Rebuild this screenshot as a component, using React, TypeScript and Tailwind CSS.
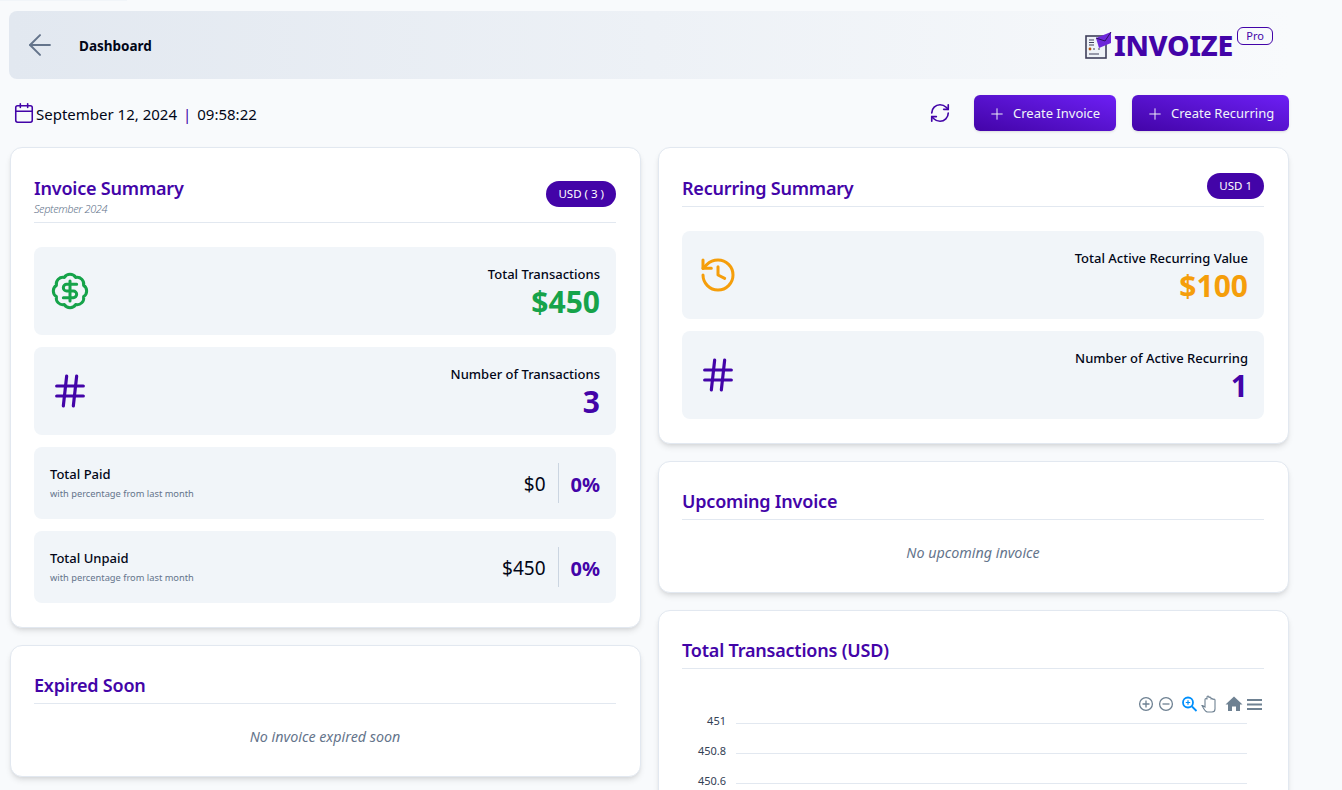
import { ArrowLeft, BadgeDollarSign, Calendar, Hash, History, Plus, RefreshCw } from 'lucide-react';

function Logo() {
  return (
    <svg width="27" height="28" viewBox="0 0 27 28" className="shrink-0">
      <rect x="1" y="5" width="20" height="22" fill="#eef2f7" stroke="#3f3f5a" strokeWidth="1.6" />
      <path d="M4 9h5M4 11.500h5M4 14h5" stroke="#3f3f5a" strokeWidth="1.2" />
      <circle cx="5" cy="18" r="1.400" fill="#b45309" />
      <path d="M8 18h2M13 18h2M4 23h10" stroke="#3f3f5a" strokeWidth="1.200" />
      <path d="M11 7 26 1v11l-12 5z" fill="#6d28d9" />
      <path d="M11 7l9 3 6-9" fill="none" stroke="#2e1065" strokeWidth="1" />
    </svg>
  );
}

function SectionTitle({ title, sub, badge }: { title: string; sub?: string; badge?: string }) {
  return (
    <div className="flex justify-between border-b border-[#e2e8f0]">
      <div className={sub ? 'pb-[6px]' : 'pb-[3px]'}>
        <h2 className="text-[18px] leading-[30px] font-semibold tracking-[-0.2px] text-[#4304a8]">{title}</h2>
        {sub && <p className="-translate-y-px text-[11px] leading-[13px] font-light italic text-[#64748b] tracking-[-0.4px]">{sub}</p>}
      </div>
      {badge && (
        <span className={`h-[26px] rounded-full bg-[#4304a8] px-[12px] text-[11.5px] leading-[26px] text-white ${sub ? 'mt-2' : ''}`}>{badge}</span>
      )}
    </div>
  );
}

function StatBox({ icon, label, value, color }: { icon: React.ReactNode; label: string; value: string; color: string }) {
  return (
    <div className="flex h-[88px] items-center justify-between rounded-lg bg-[#f1f5f9] px-4">
      {icon}
      <div className="pt-[2px] text-right">
        <p className="translate-y-px text-[13px] leading-[19px] font-medium text-[#020617]">{label}</p>
        <p className={`text-[30px] leading-[38px] font-bold ${color}`}>{value}</p>
      </div>
    </div>
  );
}

function PaidRow({ label, value }: { label: string; value: string }) {
  return (
    <div className="flex h-[72px] items-center justify-between rounded-lg bg-[#f1f5f9] px-4">
      <div>
        <p className="text-[13px] leading-[19px] font-medium text-[#020617]">{label}</p>
        <p className="mt-[3px] text-[9.300px] leading-[14px] text-[#64748b]">with percentage from last month</p>
      </div>
      <div className="flex h-10 items-center">
        <span className="pr-3 pt-[3px] text-[19px] text-[#020617]">{value}</span>
        <span className="flex h-10 items-center border-l border-[#cbd5e1] pl-3 pt-[3px] text-[20px] font-bold text-[#4304a8]">0%</span>
      </div>
    </div>
  );
}

function EmptyCard({ title, text }: { title: string; text: string }) {
  return (
    <div className="h-[132px] rounded-xl border border-[#e2e8f0] bg-white pl-[23px] pr-6 pt-6 shadow-md">
      <SectionTitle title={title} />
      <p className="mt-[23px] text-center text-[14.300px] leading-[19px] italic text-[#64748b]">{text}</p>
    </div>
  );
}

function ChartToolbar() {
  return (
    <div className="flex h-5 items-center justify-end pr-px">
      <svg width="125" height="20" viewBox="0 0 125 20" fill="none" stroke="#6e8192" strokeWidth="1.3">
        <circle cx="8" cy="10" r="6.400" />
        <path d="M8 6.500v7M4.500 10h7" />
        <circle cx="28" cy="10" r="6.400" />
        <path d="M24.500 10h7" />
        <g stroke="#008ffb" strokeWidth="1.800">
          <circle cx="50" cy="8.500" r="5" />
          <path d="M54 12.500l4.500 4.500" />
          <path d="M47.800 8.500h4.400M50 6.300v4.400" strokeWidth="1.200" />
        </g>
        <path d="M64.500 11.500l2.500 1.500V5.500a1 1 0 0 1 2 0V3a1 1 0 0 1 2 0v1a1 1 0 0 1 2 0v1.500a1 1 0 0 1 2 0v.500a1 1 0 0 1 2 0v9c0 1.500-1 3-3 3h-4.500c-2 0-3.500-2.500-5.500-6.500z" strokeWidth="1.100" />
        <path d="M96 2.500l8.500 8h-2.500V17h-4v-4.500h-4V17h-4v-6.500h-2.500z" fill="#6e8192" stroke="none" />
        <path d="M109 6h15M109 10.500h15M109 15h15" strokeWidth="2" />
      </svg>
    </div>
  );
}

function GridLine({ label }: { label: string }) {
  return (
    <div className="flex h-[30px] items-start">
      <span className="w-[44px] -translate-y-[10px] text-right text-[11px] leading-[15px] text-[#334155]">{label}</span>
      <span className="ml-[10px] flex-1 border-t border-[#e2e8f0]" />
    </div>
  );
}

export default function App() {
  return (
    <div className="h-[790px] w-[1342px] overflow-hidden bg-[#f8fafc] font-['Noto_Sans',sans-serif]">
      <div className="h-px w-[127px] bg-[#f1f5f9]" />
      <div className="w-[1289px] pl-[9px] pt-[10px]">
        <header className="flex h-[68px] items-center justify-between rounded-l-lg bg-gradient-to-r from-[#e2e8f0] to-[#f8fafc] pl-[14px] pr-4">
          <div className="flex items-center gap-[22px]">
            <ArrowLeft className="h-[34px] w-[34px] text-[#64748b]" strokeWidth={1.400} />
            <span className="translate-y-px text-[13.500px] font-bold text-[#020617]">Dashboard</span>
          </div>
          <div className="relative mr-[40px] flex items-center gap-[2px]">
            <Logo />
            <span className="text-[28.500px] leading-[36px] font-extrabold tracking-[-0.3px] text-[#4304a8]">INVOIZE</span>
            <span className="absolute -right-[40px] top-0 h-[18px] rounded-md border border-[#4304a8] px-2 text-[11px] leading-[16px] text-[#4304a8]">Pro</span>
          </div>
        </header>

        <div className="mt-4 flex h-9 items-center justify-between pl-[4px]">
          <div className="flex items-center gap-px text-[15px] text-[#020617]">
            <Calendar className="h-[22px] w-[22px] text-[#4304a8]" strokeWidth={1.700} />
            <span className="translate-y-px">September 12, 2024</span>
            <span className="mx-[5px] translate-y-px text-[#4304a8]">|</span>
            <span className="translate-y-px">09:58:22</span>
          </div>
          <div className="flex items-center">
            <RefreshCw className="mr-[23px] h-[22px] w-[22px] text-[#4304a8]" strokeWidth={1.800} />
            <button className="flex h-9 w-[142px] items-center gap-[7px] rounded-md bg-gradient-to-tr from-[#4304a8] to-[#6d1ff5] pl-[14px] pt-px text-[13px] text-[#f1f5f9] shadow-sm">
              <Plus className="h-[18px] w-[18px]" strokeWidth={1.300} /> Create Invoice
            </button>
            <button className="ml-4 flex h-9 w-[157px] items-center gap-[7px] rounded-md bg-gradient-to-tr from-[#4304a8] to-[#6d1ff5] pl-[14px] pt-px text-[13px] text-[#f1f5f9] shadow-sm">
              <Plus className="h-[18px] w-[18px]" strokeWidth={1.300} /> Create Recurring
            </button>
          </div>
        </div>

        <div className="mt-4 grid grid-cols-[631px_631px] gap-x-[17px] pl-px">
          <div className="flex flex-col gap-[17px]">
            <section className="h-[481px] rounded-xl border border-[#e2e8f0] bg-white pl-[23px] pr-6 pt-[25px] shadow-md">
              <SectionTitle title="Invoice Summary" sub="September 2024" badge="USD ( 3 )" />
              <div className="mt-6 flex flex-col gap-3">
                <StatBox
                  icon={<BadgeDollarSign className="h-10 w-10 text-[#16a34a]" strokeWidth={1.800} />}
                  label="Total Transactions"
                  value="$450"
                  color="text-[#16a34a]"
                />
                <StatBox
                  icon={<Hash className="h-10 w-10 text-[#4304a8]" strokeWidth={1.900} />}
                  label="Number of Transactions"
                  value="3"
                  color="text-[#4304a8]"
                />
                <PaidRow label="Total Paid" value="$0" />
                <PaidRow label="Total Unpaid" value="$450" />
              </div>
            </section>
            <EmptyCard title="Expired Soon" text="No invoice expired soon" />
          </div>

          <div className="flex flex-col gap-[17px]">
            <section className="h-[297px] rounded-xl border border-[#e2e8f0] bg-white pl-[23px] pr-6 pt-[25px] shadow-md">
              <SectionTitle title="Recurring Summary" badge="USD 1" />
              <div className="mt-6 flex flex-col gap-3">
                <StatBox
                  icon={<History className="h-10 w-10 text-[#f59e0b]" strokeWidth={1.800} />}
                  label="Total Active Recurring Value"
                  value="$100"
                  color="text-[#f59e0b]"
                />
                <StatBox
                  icon={<Hash className="h-10 w-10 text-[#4304a8]" strokeWidth={1.900} />}
                  label="Number of Active Recurring"
                  value="1"
                  color="text-[#4304a8]"
                />
              </div>
            </section>
            <EmptyCard title="Upcoming Invoice" text="No upcoming invoice" />
            <section className="h-[300px] rounded-xl border border-[#e2e8f0] bg-white pl-[23px] pr-6 pt-6 shadow-md">
              <SectionTitle title="Total Transactions (USD)" />
              <div className="mt-[25px]">
                <ChartToolbar />
                <div className="mt-[9px] pr-[17px]">
                  <GridLine label="451" />
                  <GridLine label="450.8" />
                  <GridLine label="450.6" />
                </div>
              </div>
            </section>
          </div>
        </div>
      </div>
    </div>
  );
}
